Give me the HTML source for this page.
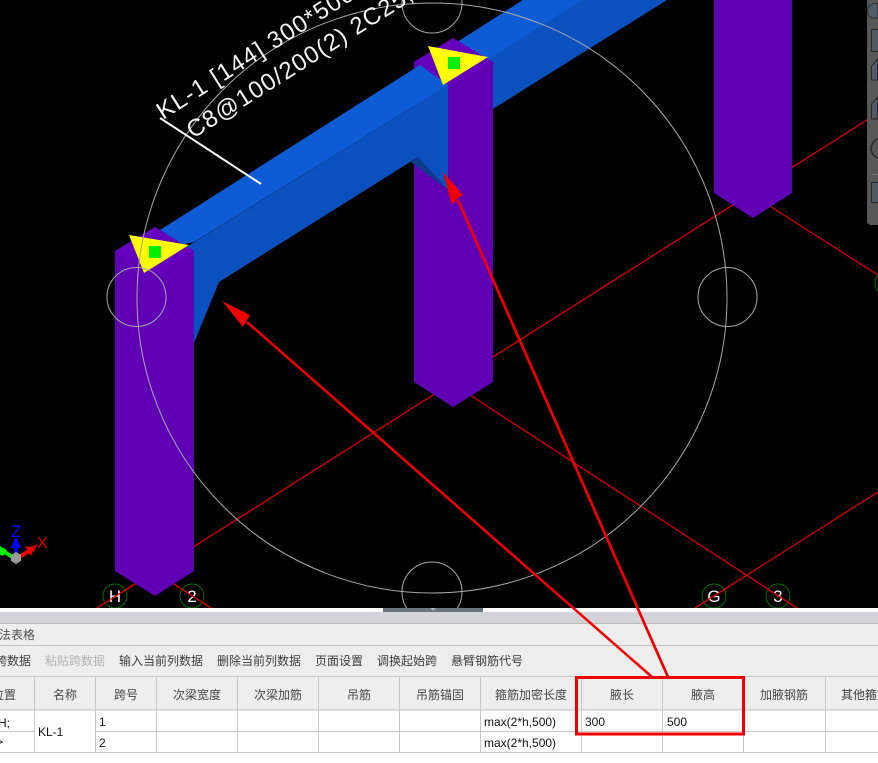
<!DOCTYPE html>
<html><head><meta charset="utf-8">
<style>
html,body{margin:0;padding:0;background:#000;width:878px;height:763px;overflow:hidden}
svg{display:block}
.c{font-family:"Liberation Sans","Noto Sans CJK SC",sans-serif;font-size:12px;fill:#3c3c3c}
.d{fill:#b4b4b4}
.h{text-anchor:middle;fill:#484848}
.v{font-family:"Liberation Sans",sans-serif;font-size:12px;fill:#111}
.g{font-family:"Liberation Sans",sans-serif;font-size:17px;fill:#f4f4f4;text-anchor:middle}
.n{font-family:"Liberation Sans",sans-serif;font-size:24px;fill:#f4f4f4}
</style></head>
<body>
<svg width="878" height="763" viewBox="0 0 878 763" xmlns="http://www.w3.org/2000/svg">
<rect width="878" height="763" fill="#000"/>
<!-- grid -->
<g stroke="#e00000" stroke-width="1.200" fill="none">
<line x1="97" y1="608" x2="878" y2="113"/>
<line x1="765" y1="203" x2="878" y2="275"/>
<line x1="470" y1="395" x2="797" y2="608"/>
<line x1="878" y1="492" x2="695" y2="608"/>
<line x1="174" y1="584" x2="211" y2="608"/>
</g>
<!-- right column -->
<polygon points="714,0 792,0 792,193 753,218 714,193" fill="#5f00b5"/>
<!-- beam behind middle column -->
<polygon points="448,137 667,0 523,0 448,48" fill="#0b50bf"/>
<polygon points="448,48 523,0 582,0 448,85" fill="#0d5cd6"/>
<!-- middle column -->
<polygon points="453,38 493,62 493,382 453,407 414,382 414,62" fill="#5f00b5"/>
<polygon points="453,38 493,62 448,87 414,62" fill="#6500be"/>
<!-- beam front -->
<polygon points="170,260 188,246 448,85 448,190 418,157 219,282 194,343 170,343" fill="#0b50bf"/>
<polygon points="160,230 420,65 448,85 194,242 155,250" fill="#0d5cd6"/>
<polygon points="411,162 418,157 448,190" fill="#0a3b8c"/>
<!-- left column -->
<polygon points="155,227 194,251 194,571 155,596 115,571 115,251" fill="#5f00b5"/>
<polygon points="155,227 194,251 155,276 115,251" fill="#6500be"/>
<!-- markers -->
<polygon points="129,235 189,245 144,273" fill="#ffff00"/>
<rect x="149" y="246" width="12" height="12" fill="#00ee00"/>
<polygon points="428,46 488,57 443,85" fill="#ffff00"/>
<rect x="448" y="57" width="12" height="12" fill="#00ee00"/>
<!-- circles -->
<g fill="none" stroke="#a8a8a8" stroke-width="1">
<circle cx="432" cy="298" r="295"/>
<circle cx="136.500" cy="297" r="29.500"/>
<circle cx="727.500" cy="297" r="29.500"/>
<circle cx="432" cy="3" r="30"/>
<circle cx="432" cy="592" r="30"/>
</g>
<!-- label -->
<line x1="160" y1="118" x2="261" y2="184" stroke="#fff" stroke-width="2"/>
<text class="n" transform="translate(163,120) rotate(-32.300)" textLength="228" lengthAdjust="spacing">KL-1 [144] 300*500</text>
<text class="n" transform="translate(193,139) rotate(-32.300)" textLength="262" lengthAdjust="spacing">C8@100/200(2) 2C25;</text>
<!-- axis labels -->
<g fill="none" stroke="#006f00" stroke-width="1">
<circle cx="115" cy="596" r="12"/>
<circle cx="192" cy="596" r="12"/>
<circle cx="714" cy="596" r="12"/>
<circle cx="778" cy="596" r="12"/>
<circle cx="887" cy="283" r="12"/>
</g>
<text class="g" x="115" y="602">H</text>
<text class="g" x="192" y="602">2</text>
<text class="g" x="714" y="602">G</text>
<text class="g" x="778" y="602">3</text>
<g stroke="#e00000" stroke-width="1.200"><line x1="97" y1="608" x2="135" y2="584"/><line x1="174" y1="584" x2="211" y2="608"/><line x1="695" y1="608" x2="730" y2="586"/><line x1="763" y1="586" x2="797" y2="608"/></g>
<!-- gizmo -->
<polygon points="0,546 7,550 3,556 0,555" fill="#00f000"/>
<line x1="14" y1="558" x2="3" y2="551" stroke="#00f000" stroke-width="4"/>
<polygon points="28,547 38,544 34,552" fill="#a80000"/>
<line x1="19" y1="557" x2="31" y2="550" stroke="#f00000" stroke-width="4"/>
<polygon points="34,548 25,546 31,556" fill="#f00000"/>
<line x1="16" y1="558" x2="16" y2="545" stroke="#0000f0" stroke-width="4"/>
<polygon points="16,536 21,548 11,548" fill="#0000ff"/>
<polygon points="16,552 21,555 21,561 16,564 11,561 11,555" fill="#999"/>
<text x="11" y="537" font-family="Liberation Sans,sans-serif" font-size="17" fill="#0000ff">Z</text>
<text x="37" y="548" font-family="Liberation Sans,sans-serif" font-size="16" fill="#e00000">X</text>
<!-- side toolbar -->
<path d="M878 0H867V221a4 4 0 0 0 4 4H878Z" fill="#575757"/>
<g fill="#505a66" stroke="#2a2a2a" stroke-width="1">
<path d="M872 18a6 6 0 0 1 6-14V18Z"/>
<rect x="871.500" y="29.500" width="8" height="22"/>
<path d="M871.500 80V66l6-7V80Z"/>
<path d="M871.500 119V104l6-7V119Z"/>
<rect x="871.500" y="182.500" width="8" height="20"/>
</g>
<path d="M878 139a10 10 0 0 0 0 19" fill="none" stroke="#2a2a2a" stroke-width="1.500"/>
<line x1="872" y1="174.500" x2="878" y2="174.500" stroke="#777"/>
<!-- bottom panel -->
<rect x="0" y="608" width="878" height="155" fill="#fff"/>
<rect x="0" y="612" width="878" height="11" fill="#d3d4d9"/>
<rect x="383" y="608" width="100" height="4" fill="#6b7580"/>
<polygon points="430,608 436,608 433,611" fill="#aab"/>
<rect x="0" y="624" width="878" height="86" fill="#eeeeee"/>
<rect x="0" y="623" width="878" height="1" fill="#bcbcbc"/>
<rect x="0" y="645" width="878" height="1" fill="#c4c4c4"/>
<rect x="0" y="676" width="878" height="1" fill="#c8c8cc"/>
<rect x="0" y="709" width="878" height="1.500" fill="#d0d0d4"/>
<rect x="0" y="731" width="878" height="1" fill="#c8c8cc"/>
<rect x="0" y="752" width="878" height="1" fill="#c8c8cc"/>
<g fill="#c8c8cc">
<rect x="34" y="677" width="1" height="76"/>
<rect x="95" y="677" width="1" height="76"/>
<rect x="156" y="677" width="1" height="76"/>
<rect x="237" y="677" width="1" height="76"/>
<rect x="318" y="677" width="1" height="76"/>
<rect x="399" y="677" width="1" height="76"/>
<rect x="480" y="677" width="1" height="76"/>
<rect x="581" y="677" width="1" height="76"/>
<rect x="662" y="677" width="1" height="76"/>
<rect x="743" y="677" width="1" height="76"/>
<rect x="825" y="677" width="1" height="76"/>
</g>
<rect x="35" y="731" width="60" height="1" fill="#fff"/>
<text class="c" x="-1" y="639" style="fill:#505050">法表格</text>
<text class="c" x="-5" y="665">跨数据</text>
<text class="c d" x="45" y="665">粘贴跨数据</text>
<text class="c" x="119" y="665">输入当前列数据</text>
<text class="c" x="217" y="665">删除当前列数据</text>
<text class="c" x="315" y="665">页面设置</text>
<text class="c" x="377" y="665">调换起始跨</text>
<text class="c" x="451" y="665">悬臂钢筋代号</text>
<text class="c h" x="4" y="699">位置</text>
<text class="c h" x="65" y="699">名称</text>
<text class="c h" x="126" y="699">跨号</text>
<text class="c h" x="197" y="699">次梁宽度</text>
<text class="c h" x="278" y="699">次梁加筋</text>
<text class="c h" x="359" y="699">吊筋</text>
<text class="c h" x="440" y="699">吊筋锚固</text>
<text class="c h" x="531" y="699">箍筋加密长度</text>
<text class="c h" x="622" y="699">腋长</text>
<text class="c h" x="703" y="699">腋高</text>
<text class="c h" x="784" y="699">加腋钢筋</text>
<text class="c" x="841" y="699">其他箍筋</text>
<text class="v" x="-2" y="727">H;</text>
<text class="v" x="-4" y="746">&gt;</text>
<text class="v" x="38" y="736">KL-1</text>
<text class="v" x="99" y="726">1</text>
<text class="v" x="99" y="747">2</text>
<text class="v" x="484" y="726">max(2*h,500)</text>
<text class="v" x="484" y="747">max(2*h,500)</text>
<text class="v" x="585" y="726">300</text>
<text class="v" x="667" y="726">500</text>
<!-- annotations -->
<rect x="576.500" y="677.500" width="167" height="56.500" fill="none" stroke="#f00000" stroke-width="3"/>
<line x1="652" y1="677" x2="247" y2="322" stroke="#f00000" stroke-width="2.500"/>
<line x1="668" y1="677" x2="458" y2="200" stroke="#f00000" stroke-width="2.700"/>
<polygon points="222,301 250,315 247,320 243,327" fill="#f00000"/>
<polygon points="443,172 463,195 458,198 452,205" fill="#f00000"/>
</svg>
</body></html>
